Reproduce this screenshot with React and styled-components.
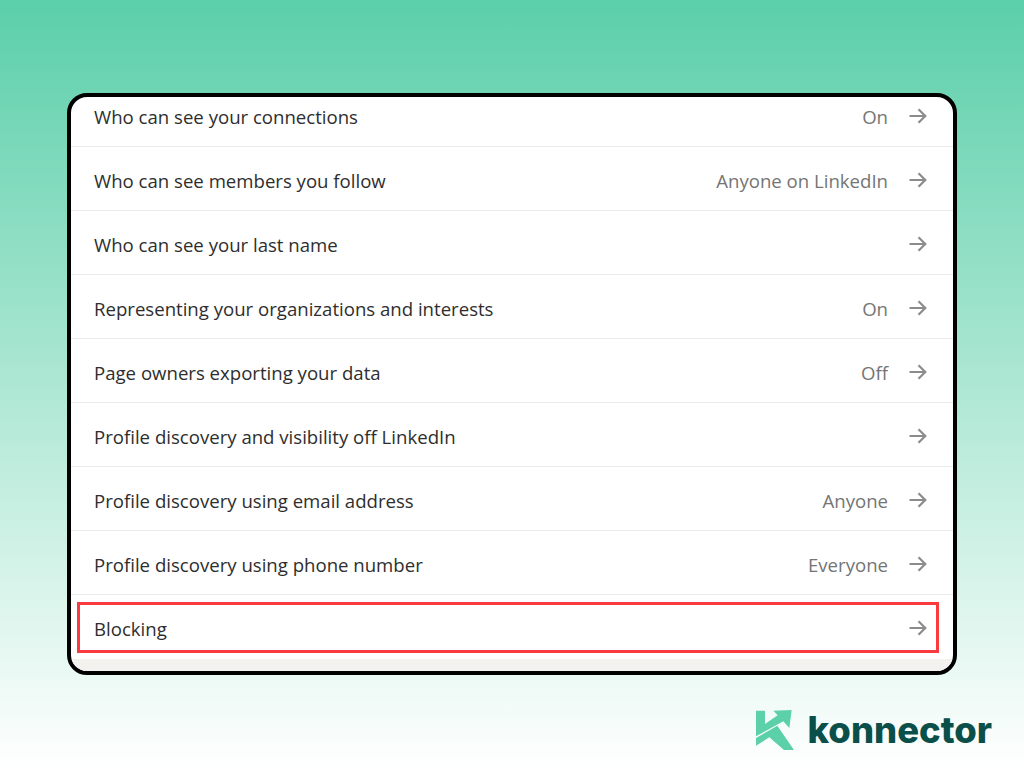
import React from "react";
import styled, { createGlobalStyle } from "styled-components";

const rows = [
    { label: "Who can see your connections", value: "On" },
    { label: "Who can see members you follow", value: "Anyone on LinkedIn" },
    { label: "Who can see your last name" },
    { label: "Representing your organizations and interests", value: "On" },
    { label: "Page owners exporting your data", value: "Off" },
    { label: "Profile discovery and visibility off LinkedIn" },
    { label: "Profile discovery using email address", value: "Anyone" },
    { label: "Profile discovery using phone number", value: "Everyone" },
    { label: "Blocking", boxed: true },
];

function Arrow() {
    return (
        <ArrowIcon viewBox="0 0 18 16" fill="none" stroke="#8c8c8c" strokeWidth="2.2">
            <path d="M0.5 8H16M9.5 1.2L16.3 8L9.5 14.8" />
        </ArrowIcon>
    );
}

function KonnectorMark() {
    return (
        <MarkIcon viewBox="48 58 114 120" fill="#5cd0a8">
            <path d="M48 60H75V100L113 74L100 60L155 58L148 112L130 92L48 137Z" />
            <path d="M48 142L112 105L162 178H132L88 140L48 165Z" />
        </MarkIcon>
    );
}

export default function App() {
    return (
        <>
            <GlobalStyle />
            <Page>
                <Card>
                    {rows.map((row) => (
                        <Row key={row.label} boxed={row.boxed}>
                            <RowInner boxed={row.boxed}>
                                <Label>{row.label}</Label>
                                {row.value && <Value>{row.value}</Value>}
                                <Arrow />
                            </RowInner>
                        </Row>
                    ))}
                    <Footer />
                </Card>
                <Brand>
                    <KonnectorMark />
                    <BrandName>konnector</BrandName>
                </Brand>
            </Page>
        </>
    );
}

const GlobalStyle = createGlobalStyle`
    html, body {
        margin: 0;
        padding: 0;
    }
    * {
        box-sizing: border-box;
    }
`;

const Page = styled.div`
    width: 1024px;
    height: 768px;
    overflow: hidden;
    padding: 93px 32px 0 67px;
    display: flex;
    flex-direction: column;
    align-items: flex-start;
    background: linear-gradient(180deg, #5bcfa9 0%, #ffffff 100%);
    font-family: "Open Sans", "Noto Sans", sans-serif;
`;

const Card = styled.div`
    width: 890px;
    height: 582px;
    border: 4px solid #000;
    border-radius: 20px;
    background: #fff;
    overflow: hidden;
    display: flex;
    flex-direction: column;
`;

const Row = styled.div`
    height: 64px;
    flex: none;
    border-bottom: ${(props) => (props.boxed ? "none" : "1px solid #ebebeb")};
    padding: ${(props) => (props.boxed ? "7px 14px 6px 6px" : "0")};
    &:first-child {
        margin-top: -14px;
    }
`;

const RowInner = styled.div`
    height: 100%;
    display: flex;
    align-items: center;
    padding: ${(props) => (props.boxed ? "1px 9px 0 14px" : "4px 26px 0 23px")};
    border: ${(props) => (props.boxed ? "3px solid #f93a3f" : "none")};
`;

const Label = styled.span`
    flex: 1;
    font-size: 18.6px;
    color: #2e2e2e;
`;

const Value = styled.span`
    font-size: 18.6px;
    color: #757575;
`;

const ArrowIcon = styled.svg`
    width: 18px;
    height: 16px;
    margin-left: 21px;
    margin-top: -1px;
    flex: none;
`;

const Footer = styled.div`
    flex: 1;
    background: #f3f2ef;
`;

const Brand = styled.div`
    align-self: flex-end;
    margin-top: 34px;
    display: flex;
    align-items: center;
    gap: 14px;
`;

const MarkIcon = styled.svg`
    width: 38px;
    height: 40px;
    flex: none;
`;

const BrandName = styled.span`
    font-family: "Inter", sans-serif;
    font-weight: 800;
    font-size: 36.4px;
    line-height: 42px;
    color: #0b4f4a;
`;
